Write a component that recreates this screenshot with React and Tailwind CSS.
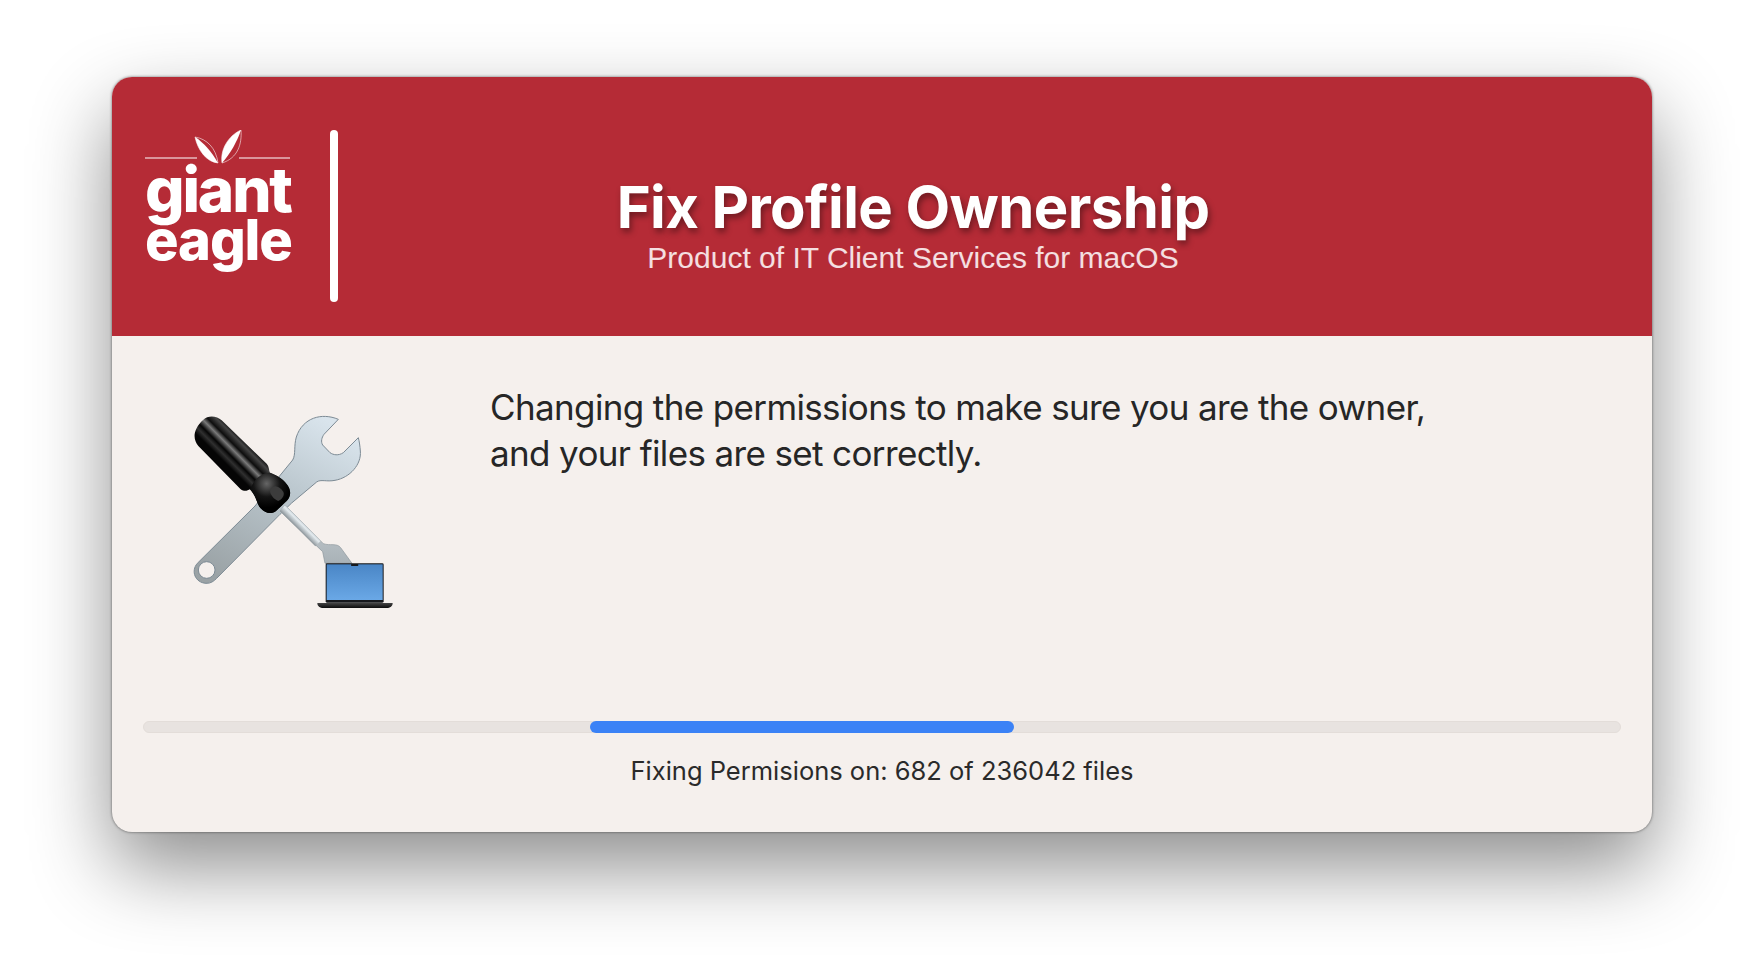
import React from 'react';

const ToolsIcon = () => (
  <svg width="240" height="220" viewBox="0 0 720 660" className="block">
    <defs>
      <linearGradient id="wrenchFill" x1="0.75" y1="0" x2="0.2" y2="1">
        <stop offset="0" stopColor="#d9e4ec" />
        <stop offset="0.4" stopColor="#bcc8cf" />
        <stop offset="1" stopColor="#9aa2a5" />
      </linearGradient>
      <linearGradient id="handleFill" gradientUnits="userSpaceOnUse" x1="150" y1="170" x2="215" y2="105">
        <stop offset="0" stopColor="#050505" />
        <stop offset="0.16" stopColor="#303030" />
        <stop offset="0.3" stopColor="#050505" />
        <stop offset="0.48" stopColor="#7a7a7a" />
        <stop offset="0.62" stopColor="#0d0d0d" />
        <stop offset="0.82" stopColor="#444" />
        <stop offset="1" stopColor="#000" />
      </linearGradient>
      <radialGradient id="collarFill" gradientUnits="userSpaceOnUse" cx="290" cy="248" r="72">
        <stop offset="0" stopColor="#666" />
        <stop offset="0.55" stopColor="#141414" />
        <stop offset="1" stopColor="#000" />
      </radialGradient>
      <linearGradient id="shaftFill" gradientUnits="userSpaceOnUse" x1="385" y1="385" x2="410" y2="360">
        <stop offset="0" stopColor="#8b9499" />
        <stop offset="0.5" stopColor="#e4ebef" />
        <stop offset="1" stopColor="#98a2a8" />
      </linearGradient>
      <linearGradient id="bladeFill" x1="0" y1="0" x2="0" y2="1">
        <stop offset="0" stopColor="#c8d0d5" />
        <stop offset="1" stopColor="#a9b2b7" />
      </linearGradient>
      <linearGradient id="screenFill" x1="0" y1="0" x2="0" y2="1">
        <stop offset="0" stopColor="#4a86c6" />
        <stop offset="1" stopColor="#6aa8e6" />
      </linearGradient>
      <linearGradient id="baseFill" x1="0" y1="0" x2="0" y2="1">
        <stop offset="0" stopColor="#444" />
        <stop offset="1" stopColor="#0c0c0c" />
      </linearGradient>
    </defs>

    {/* wrench */}
    <path
      fillRule="evenodd"
      d="M505 55 C455 34 398 50 379 108 C371 135 378 160 368 177 L255 315 L82 487 C62 510 75 545 108 547 C122 548 132 540 140 532 L330 340 L365 306 L440 243 C452 234 470 243 495 238 C540 230 575 190 571 150 C570 135 568 122 565 110 L520 155 C505 165 490 162 480 155 L458 132 C452 122 455 110 462 100 Z M110 482 A25 25 0 1 0 110.1 532 A25 25 0 1 0 110 482 Z"
      fill="url(#wrenchFill)"
      stroke="#7c8a94"
      strokeWidth="3"
    />

    {/* screwdriver shaft and blade */}
    <path d="M345 312 L460 428 C480 435 500 425 512 440 L546 487 L465 487 L458 452 L330 330 Z" fill="url(#bladeFill)" stroke="#8a949a" strokeWidth="2" />
    <path d="M345 312 L452 420 L436 436 L330 330 Z" fill="url(#shaftFill)" />

    {/* screwdriver handle */}
    <path
      d="M100 56 C115 42 140 44 155 58 L290 188 C298 198 296 205 300 215 C315 222 335 228 352 252 C365 270 362 288 350 300 L318 330 C302 342 285 335 272 322 C258 305 262 290 240 265 C232 270 222 272 212 265 L85 135 C68 115 68 85 100 56 Z"
      fill="url(#handleFill)"
    />
    <path
      d="M240 265 C250 240 270 215 300 215 C315 222 335 228 352 252 C365 270 362 288 350 300 L318 330 C302 342 285 335 272 322 C258 305 262 290 240 265 Z"
      fill="url(#collarFill)"
    />
    <path d="M300 268 C310 248 328 255 340 272 C345 284 335 295 325 300 C312 296 300 282 300 268 Z" fill="#3c3c3c" />

    {/* laptop */}
    <rect x="467" y="487" width="174" height="118" rx="4" fill="#16181c" />
    <rect x="470" y="490" width="168" height="107" fill="url(#screenFill)" />
    <rect x="543" y="489" width="22" height="6" rx="2" fill="#16181c" />
    <path d="M442 606 L668 606 C668 616 660 621 650 621 L460 621 C450 621 442 616 442 606 Z" fill="url(#baseFill)" />
  </svg>
);

const GiantEagleLogo = () => (
  <div className="w-[160px] flex flex-col items-start pt-[53px] blur-[0.6px]">
    <svg width="146" height="36" viewBox="0 0 146 36" className="block">
      <path d="M0 28 H52 M94 28 H145" stroke="#fff" strokeOpacity="0.5" strokeWidth="2" />
      <path d="M50 7 C62 9 71 18 73 33 C62 32 53 21 50 7 Z" fill="none" stroke="#fff" strokeOpacity="0.7" strokeWidth="0.8" />
      <path d="M50 7 C58 12 67 22 73 33 C62 32 53 21 50 7 Z" fill="#fff" />
      <path d="M96 0 C97 14 93 28 77 33 C75 20 83 6 96 0 Z" fill="none" stroke="#fff" strokeOpacity="0.7" strokeWidth="0.8" />
      <path d="M96 0 C92 12 85 24 77 33 C75 20 83 6 96 0 Z" fill="#fff" />
    </svg>
    <div className="font-['Inter',sans-serif] font-extrabold text-white">
      <div className="text-[62px] leading-[48px] tracking-[-0.035em]">giant</div>
      <div className="text-[56px] leading-[48px] tracking-[-0.02em] mt-[2px]">eagle</div>
    </div>
  </div>
);

export default function App() {
  return (
    <div className="w-[1764px] h-[980px] overflow-hidden bg-white pt-[77px] pl-[112px]">
      <div className="w-[1540px] h-[755px] rounded-[20px] bg-[#f5f0ed] flex flex-col shadow-[0_35px_80px_rgba(0,0,0,0.45),0_0_3px_rgba(0,0,0,0.55)]">
        <header className="h-[259px] shrink-0 rounded-t-[20px] bg-[#b52b36] flex items-center">
          <div className="w-[226px] pl-[33px] flex items-start shrink-0 relative h-full">
            <GiantEagleLogo />
            <div className="absolute left-[218px] top-[53px] w-[8px] h-[172px] rounded-full bg-white blur-[0.6px]" />
          </div>
          <div className="w-[1150px] flex flex-col items-center pt-[35px]">
            <h1 className="font-['Inter',sans-serif] font-bold text-white text-[58px] leading-[68px] tracking-[-0.01em] [text-shadow:2px_4px_6px_rgba(0,0,0,0.4)]">
              Fix Profile Ownership
            </h1>
            <p className="font-['Liberation_Sans',Arial,sans-serif] text-white/85 text-[30px] leading-[34px]">
              Product of IT Client Services for macOS
            </p>
          </div>
        </header>

        <main className="flex-1 flex">
          <div className="w-[378px] shrink-0 pt-[65px] pl-[58px]">
            <ToolsIcon />
          </div>
          <p className="pt-[48px] font-['Inter',sans-serif] text-[#262626] text-[35px] leading-[46px] tracking-[-0.018em]">
            Changing the permissions to make sure you are the owner,
            <br />
            and your files are set correctly.
          </p>
        </main>

        <footer className="px-[31px] pb-[46px]">
          <div className="h-[12px] rounded-full bg-[#e8e3e0] border border-[#e3ddd9]">
            <div className="ml-[446px] w-[424px] h-[12px] mt-[-1px] rounded-full bg-[#3b82f6]" />
          </div>
          <p className="mt-[23px] text-center font-['Inter',sans-serif] text-[#2a2a2a] text-[25.5px] leading-[30px]">
            Fixing Permisions on: 682 of 236042 files
          </p>
        </footer>
      </div>
    </div>
  );
}
